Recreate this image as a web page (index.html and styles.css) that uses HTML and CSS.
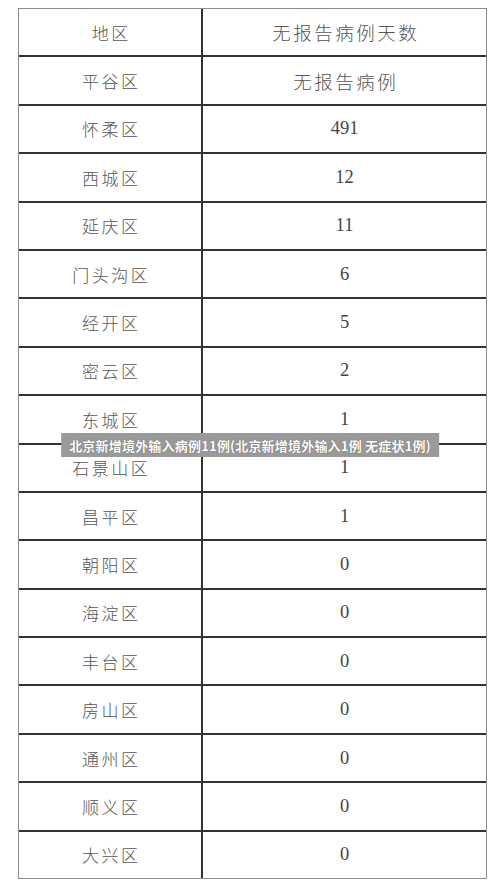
FILE: index.html
```html
<!DOCTYPE html>
<html lang="zh">
<head>
<meta charset="utf-8">
<link rel="stylesheet" href="styles.css">
</head>
<body>
<div class="wrap">
  <div class="table">
    <div class="row"><div class="cell name">地区</div><div class="cell val cjk">无报告病例天数</div></div>
    <div class="row"><div class="cell name">平谷区</div><div class="cell val cjk">无报告病例</div></div>
    <div class="row"><div class="cell name">怀柔区</div><div class="cell val">491</div></div>
    <div class="row"><div class="cell name">西城区</div><div class="cell val">12</div></div>
    <div class="row"><div class="cell name">延庆区</div><div class="cell val">11</div></div>
    <div class="row"><div class="cell name">门头沟区</div><div class="cell val">6</div></div>
    <div class="row"><div class="cell name">经开区</div><div class="cell val">5</div></div>
    <div class="row"><div class="cell name">密云区</div><div class="cell val">2</div></div>
    <div class="row"><div class="cell name">东城区</div><div class="cell val">1</div></div>
    <div class="row"><div class="cell name">石景山区</div><div class="cell val">1</div></div>
    <div class="row"><div class="cell name">昌平区</div><div class="cell val">1</div></div>
    <div class="row"><div class="cell name">朝阳区</div><div class="cell val">0</div></div>
    <div class="row"><div class="cell name">海淀区</div><div class="cell val">0</div></div>
    <div class="row"><div class="cell name">丰台区</div><div class="cell val">0</div></div>
    <div class="row"><div class="cell name">房山区</div><div class="cell val">0</div></div>
    <div class="row"><div class="cell name">通州区</div><div class="cell val">0</div></div>
    <div class="row"><div class="cell name">顺义区</div><div class="cell val">0</div></div>
    <div class="row"><div class="cell name">大兴区</div><div class="cell val">0</div></div>
  </div>
  <div class="caption">北京新增境外输入病例11例(北京新增境外输入1例 无症状1例)</div>
</div>
</body>
</html>
```
FILE: styles.css
```css
html, body {
  margin: 0;
  padding: 0;
  background: #ffffff;
}
.wrap {
  position: relative;
  padding: 8px 0 0 18px;
  width: 500px;
  height: 891px;
  box-sizing: border-box;
}
.table {
  width: 469px;
  height: 871px;
  box-sizing: border-box;
  border: 1px solid #8c8c8c;
  display: grid;
  grid-template-rows: repeat(18, 1fr);
  row-gap: 2px;
  background: #333333;
}
.row {
  display: grid;
  grid-template-columns: 182px 1fr;
  column-gap: 2px;
}
.cell {
  background: #ffffff;
  display: flex;
  align-items: center;
  justify-content: center;
  color: #555555;
}
.name, .cjk {
  font-family: "Noto Sans CJK SC", sans-serif;
  font-weight: 300;
  font-size: 17px;
  letter-spacing: 2.5px;
  padding-left: 2.5px;
}
.val {
  font-family: "Liberation Serif", "Noto Sans CJK SC", serif;
  font-size: 18.5px;
  color: #444444;
}
.cjk {
  color: #555555;
}
.caption {
  position: absolute;
  top: 433px;
  left: 50%;
  transform: translateX(-50%);
  height: 24px;
  padding: 0 8px;
  display: flex;
  align-items: center;
  white-space: nowrap;
  background: #9a9a9a;
  color: #ffffff;
  font-family: "Noto Sans CJK SC", sans-serif;
  font-weight: 700;
  font-size: 13px;
  letter-spacing: 0.2px;
  text-shadow: 0 0 1px rgba(0, 0, 0, 0.5);
}
```
